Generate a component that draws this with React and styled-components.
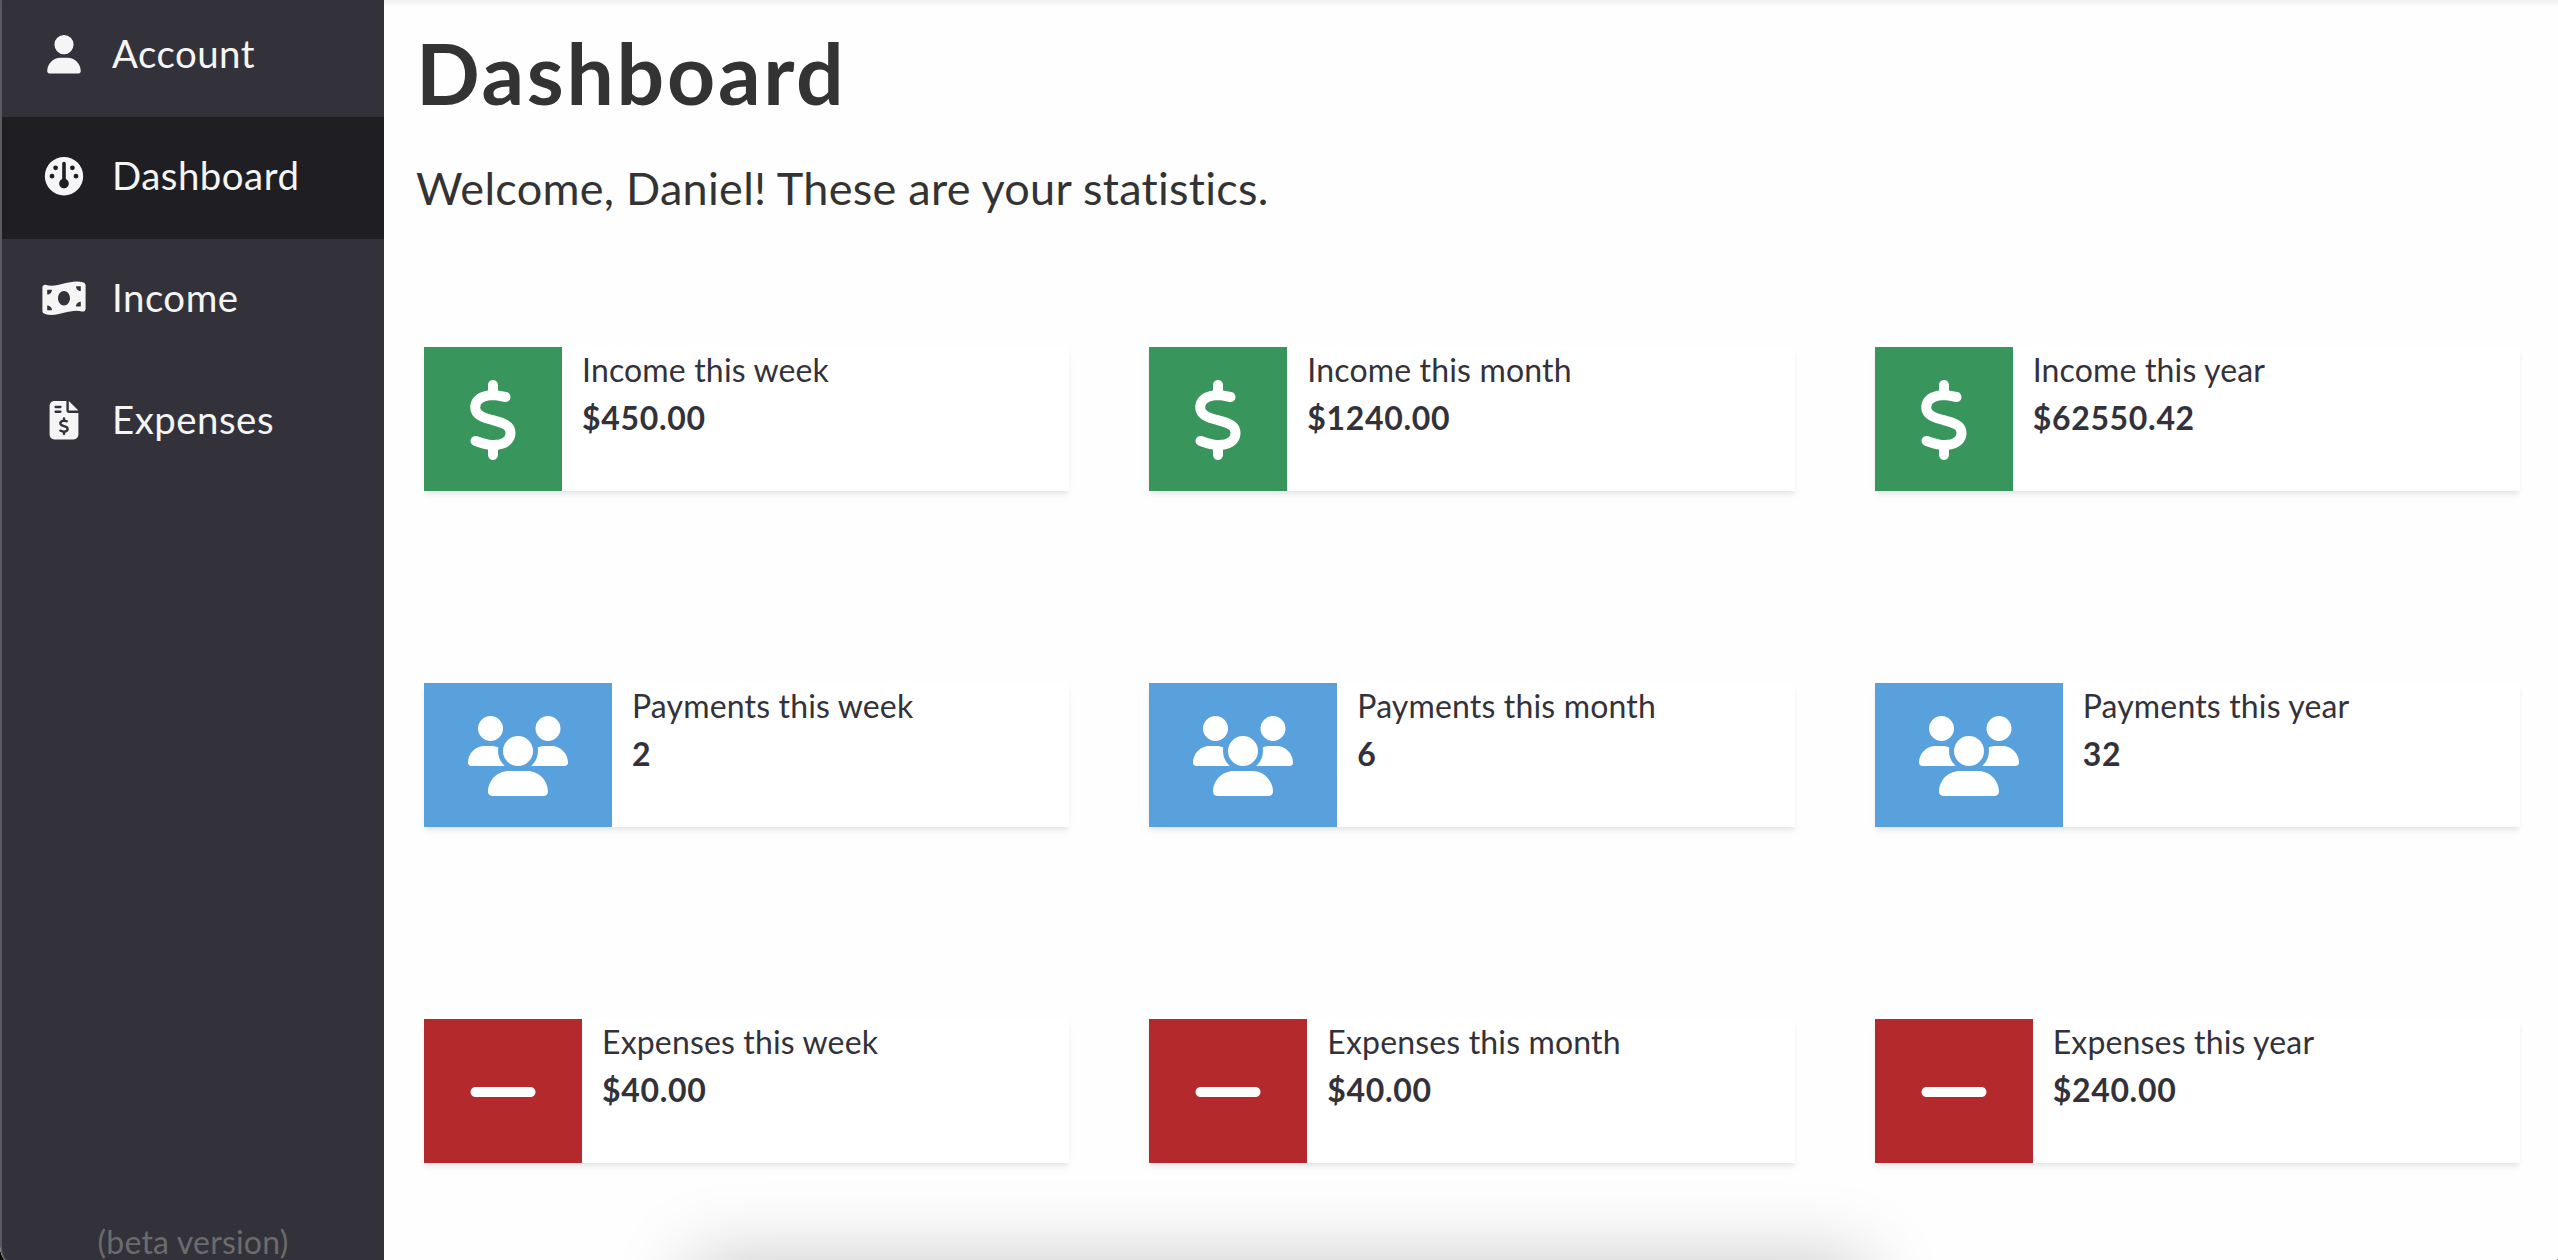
import React from "react";
import styled, { createGlobalStyle } from "styled-components";
import {
  FaUser,
  FaGauge,
  FaMoneyBillWave,
  FaFileInvoiceDollar,
  FaDollarSign,
  FaUsers,
  FaMinus,
} from "react-icons/fa6";

const navItems = [
  { label: "Account", icon: FaUser },
  { label: "Dashboard", icon: FaGauge, active: true },
  { label: "Income", icon: FaMoneyBillWave },
  { label: "Expenses", icon: FaFileInvoiceDollar },
];

const GREEN = "#38955b";
const BLUE = "#58a1dd";
const RED = "#b4292c";

const stats = [
  { label: "Income this week", value: "$450.00", icon: FaDollarSign, color: GREEN, iconWidth: 50 },
  { label: "Income this month", value: "$1240.00", icon: FaDollarSign, color: GREEN, iconWidth: 50 },
  { label: "Income this year", value: "$62550.42", icon: FaDollarSign, color: GREEN, iconWidth: 50 },
  { label: "Payments this week", value: "2", icon: FaUsers, color: BLUE, iconWidth: 100 },
  { label: "Payments this month", value: "6", icon: FaUsers, color: BLUE, iconWidth: 100 },
  { label: "Payments this year", value: "32", icon: FaUsers, color: BLUE, iconWidth: 100 },
  { label: "Expenses this week", value: "$40.00", icon: FaMinus, color: RED, iconWidth: 70 },
  { label: "Expenses this month", value: "$40.00", icon: FaMinus, color: RED, iconWidth: 70 },
  { label: "Expenses this year", value: "$240.00", icon: FaMinus, color: RED, iconWidth: 70 },
];

export default function App() {
  return (
    <Screen>
      <GlobalStyle />
      <Window>
        <Sidebar>
          <Nav>
            {navItems.map(({ label, icon: Icon, active }) => (
              <NavItem key={label} $active={active}>
                <NavIcon>
                  <Icon />
                </NavIcon>
                {label}
              </NavItem>
            ))}
          </Nav>
          <Version>(beta version)</Version>
        </Sidebar>
        <Main>
          <Title>Dashboard</Title>
          <Welcome>Welcome, Daniel! These are your statistics.</Welcome>
          <Grid>
            {stats.map(({ label, value, icon: Icon, color, iconWidth }) => (
              <Card key={label}>
                <CardIcon $color={color} $iconWidth={iconWidth}>
                  <Icon />
                </CardIcon>
                <CardText>
                  <Label>{label}</Label>
                  <Value>{value}</Value>
                </CardText>
              </Card>
            ))}
          </Grid>
        </Main>
      </Window>
      <TopShade />
      <DockShadow />
    </Screen>
  )
}

const GlobalStyle = createGlobalStyle`
  * {
    box-sizing: border-box;
  }
  body {
    margin: 0;
    font-family: "Avenir Next", Lato, sans-serif;
  }
`;

const Screen = styled.div`
  position: relative;
  height: 1260px;
  overflow: hidden;
  background: #0d0a05;
`;

const Window = styled.div`
  display: flex;
  width: 2562px;
  height: 1267px;
  border-radius: 0 0 20px 20px;
  overflow: hidden;
  background: #fefefe;
`;

const Sidebar = styled.aside`
  display: flex;
  flex-direction: column;
  justify-content: space-between;
  flex: none;
  width: 384px;
  height: 1267px;
  padding-bottom: 6px;
  background: #33323b;
  border-left: 2px solid #5a5a60;
  border-bottom-left-radius: 20px;
`;

const Nav = styled.nav`
  margin-top: -5px;
`;

const NavItem = styled.div`
  display: flex;
  align-items: center;
  gap: 24px;
  height: 122px;
  padding: 0 38px 6px;
  font-size: 38.4px;
  letter-spacing: 0.5px;
  color: #f5f5f5;
  background: ${props => props.$active ? "#1f1e23" : "transparent"};
`;

const NavIcon = styled.span`
  display: flex;
  justify-content: center;
  width: 48px;
  padding-top: 3px;

  svg {
    width: 48px;
    height: 38.4px;
  }
`;

const Version = styled.span`
  font-size: 32px;
  line-height: 38px;
  letter-spacing: 0.2px;
  text-align: center;
  color: #6b6b6c;
`;

const Main = styled.main`
  flex: none;
  width: 2174px;
  padding: 22px 38px 0 32px;
`;

const Title = styled.h1`
  margin: 0;
  font-size: 84px;
  line-height: 101px;
  letter-spacing: 2.7px;
  color: #333333;
`;

const Welcome = styled.p`
  margin: 38px 0 0;
  font-size: 45px;
  line-height: 54px;
  letter-spacing: 0.28px;
  color: #333333;
`;

const Grid = styled.div`
  display: grid;
  grid-template-columns: repeat(3, 1fr);
  gap: 192px 80px;
  margin: 132px 0 0 8px;
`;

const Card = styled.div`
  display: flex;
  height: 144px;
  background: #ffffff;
  color: #33323b;
  box-shadow: 0 4px 4px -1px rgba(50, 60, 110, 0.1),
              0 6px 12px rgba(0, 0, 0, 0.02);
`;

const CardIcon = styled.div`
  display: flex;
  align-items: center;
  padding: 2px 44px 0;
  background: ${props => props.$color};
  color: #ffffff;

  svg {
    width: ${props => props.$iconWidth}px;
    height: 80px;
  }
`;

const CardText = styled.div`
  display: flex;
  flex-direction: column;
  gap: 4px;
  padding: 1px 0 0 20px;
  font-size: 32px;
  line-height: 44px;
`;

const Label = styled.span`
  letter-spacing: 0.16px;
`;

const Value = styled.span`
  font-weight: 700;
  letter-spacing: 0.68px;
`;

// browser toolbar shade along the top edge
const TopShade = styled.div`
  position: absolute;
  top: 0;
  left: 0;
  right: 0;
  height: 7px;
  background: linear-gradient(rgba(50, 50, 50, 0.07), rgba(50, 50, 50, 0));
`;

// soft shadow thrown up by the dock below the window
const DockShadow = styled.div`
  position: absolute;
  top: 1260px;
  left: 692px;
  width: 1172px;
  height: 200px;
  box-shadow: 0 0 78px rgba(0, 0, 0, 0.22);
`;
